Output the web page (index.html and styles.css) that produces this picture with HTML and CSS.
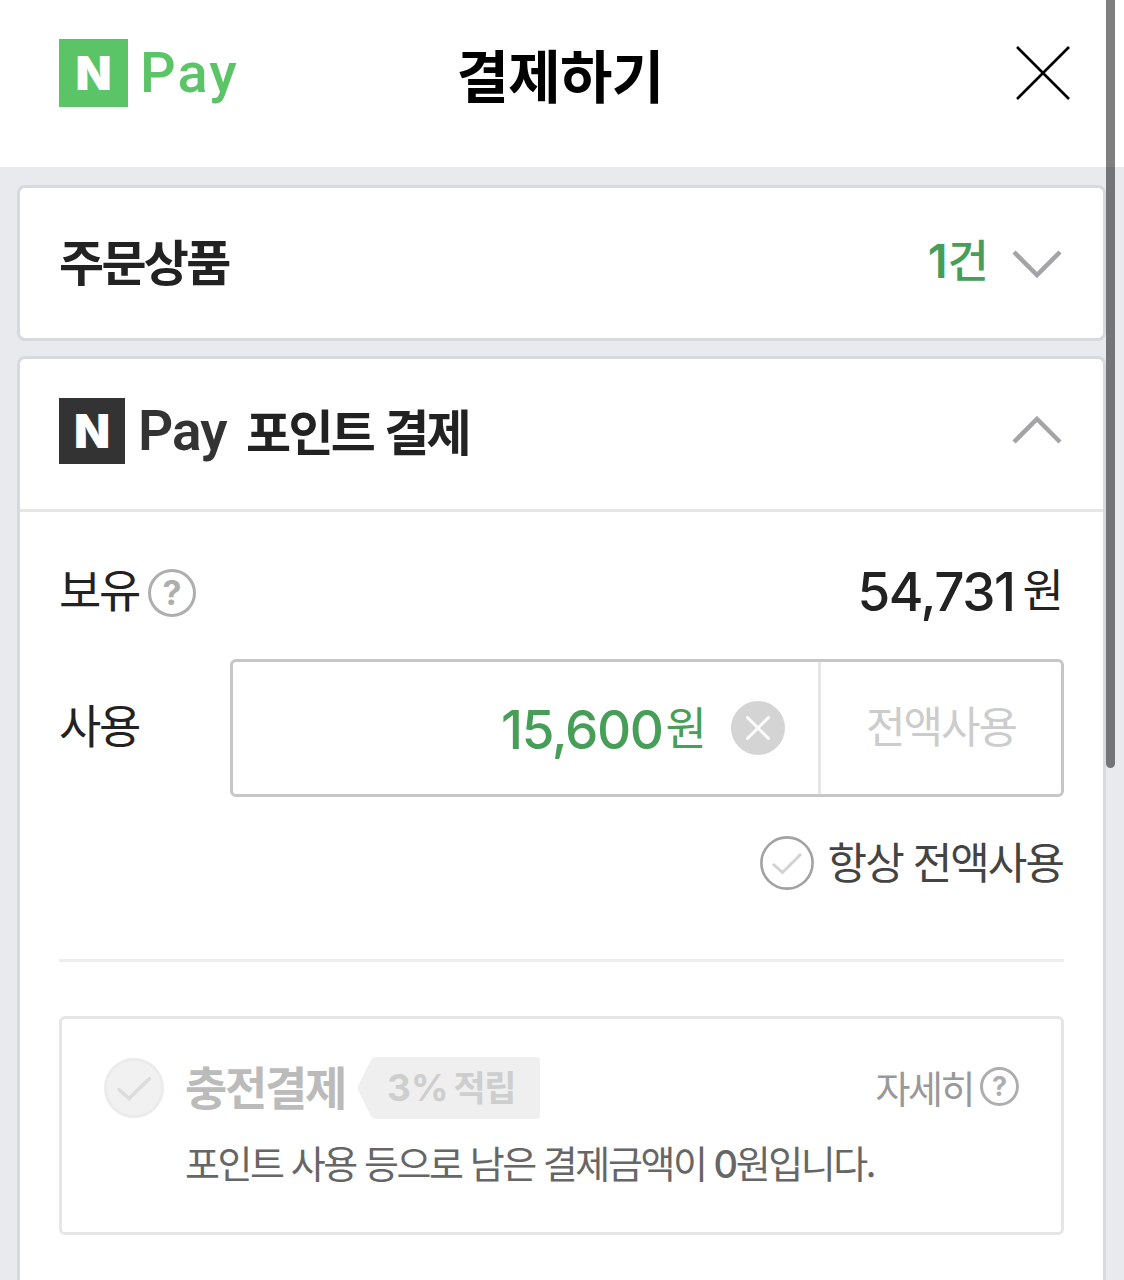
FILE: index.html
```html
<!DOCTYPE html>
<html lang="ko">
<head>
    <meta charset="UTF-8">
    <meta name="viewport" content="width=device-width, initial-scale=1.0">
    <title>결제하기</title>
    <link rel="stylesheet" href="styles.css">
</head>
<body>
    <header class="header">
        <div class="logo">
            <span class="logo-box">N</span>
            <span class="logo-pay">Pay</span>
        </div>
        <h1 class="title">결제하기</h1>
        <svg class="close" width="56" height="56" viewBox="0 0 56 56">
            <path d="M2 2L54 54M54 2L2 54" stroke="#000" stroke-width="2.6" fill="none"/>
        </svg>
    </header>

    <main class="content">
        <section class="card order">
            <div class="card-head">
                <h2 class="card-title">주문상품</h2>
                <div class="count"><span class="count-num">1</span><span class="count-unit">건</span></div>
                <svg class="arrow" width="50" height="30" viewBox="0 0 50 30">
                    <path d="M2 4L25 27L48 4" stroke="#a3a4a8" stroke-width="4.5" fill="none"/>
                </svg>
            </div>
        </section>

        <section class="card point">
            <div class="card-head line">
                <div class="logo dark">
                    <span class="logo-box">N</span>
                    <span class="logo-pay">Pay</span>
                </div>
                <h2 class="card-title">포인트 결제</h2>
                <svg class="arrow" width="50" height="30" viewBox="0 0 50 30">
                    <path d="M2 26L25 3L48 26" stroke="#a3a4a8" stroke-width="4.5" fill="none"/>
                </svg>
            </div>
            <div class="card-body">
                <div class="row have">
                    <span class="label">보유</span>
                    <span class="help">?</span>
                    <div class="money"><span class="num">54,731</span><span class="won">원</span></div>
                </div>
                <div class="row use">
                    <span class="label">사용</span>
                    <div class="input-box">
                        <div class="input">
                            <div class="money green"><span class="num">15,600</span><span class="won">원</span></div>
                            <svg class="clear" width="54" height="54" viewBox="0 0 54 54">
                                <circle cx="27" cy="27" r="27" fill="#d4d4d4"/>
                                <path d="M16.5 16.5L37.5 37.5M37.5 16.5L16.5 37.5" stroke="#fff" stroke-width="3" stroke-linecap="round"/>
                            </svg>
                        </div>
                        <div class="use-all">전액사용</div>
                    </div>
                </div>
                <div class="row always">
                    <svg width="54" height="54" viewBox="0 0 54 54">
                        <circle cx="27" cy="27" r="25.6" fill="#fff" stroke="#a2a2a4" stroke-width="2.6"/>
                        <path d="M13 28L22.5 36.5L41 18" fill="none" stroke="#d2d2d4" stroke-width="3"/>
                    </svg>
                    <span class="always-text">항상 전액사용</span>
                </div>
                <hr>
                <div class="charge">
                    <div class="charge-top">
                        <svg width="60" height="60" viewBox="0 0 60 60">
                            <circle cx="30" cy="30" r="28.6" fill="#f1f1f1" stroke="#ebebeb" stroke-width="2.8"/>
                            <path d="M15 31.5L25 40.5L45.5 20.5" fill="none" stroke="#dcdcdc" stroke-width="3.5" stroke-linecap="round"/>
                        </svg>
                        <strong class="charge-title">충전결제</strong>
                        <div class="badge">
                            <svg class="badge-bg" width="183" height="62" viewBox="0 0 183 62">
                                <path d="M1 33Q0 31 1 29L14 3Q15.5 0 18 0H180Q183 0 183 3V59Q183 62 180 62H18Q15.5 62 14 59Z" fill="#efefef"/>
                            </svg>
                            <span class="badge-num">3%</span><span class="badge-text">적립</span>
                        </div>
                        <span class="detail">자세히</span>
                        <span class="help small">?</span>
                    </div>
                    <p class="desc">포인트 사용 등으로 남은 결제금액이 <span class="zero">0</span>원입니다.</p>
                </div>
            </div>
        </section>
    </main>
    <div class="scroll"></div>
</body>
</html>
```
FILE: styles.css
```css
*{
    box-sizing: border-box;
}
body{
    margin: 0;
    height: 1280px;
    overflow: hidden;
    display: flex;
    flex-direction: column;
    font-family: "Noto Sans CJK KR", sans-serif;
    background-color: #e8eaee;
    color: #222;
}
h1, h2, p{
    margin: 0;
    white-space: nowrap;
}
svg{
    display: block;
    flex: none;
}
span, strong{
    white-space: nowrap;
}

/* header */
.header{
    height: 167px;
    flex: none;
    display: grid;
    grid-template-columns: 1fr auto 1fr;
    align-items: center;
    padding: 0 53px 21px 59px;
    background-color: #fff;
}
.title{
    margin-right: 10px;
    font-size: 57px;
    font-weight: 600;
    line-height: 80px;
    letter-spacing: -0.7px;
    color: #000;
}
.close{
    justify-self: end;
}
.logo{
    display: flex;
    align-items: center;
    color: #5bc467;
}
.logo-box{
    width: 69px;
    height: 68px;
    display: flex;
    justify-content: center;
    align-items: center;
    background-color: #5bc467;
    color: #fff;
    font-family: Inter, sans-serif;
    font-size: 47px;
    font-weight: 900;
    line-height: 68px;
}
.logo-pay{
    margin-left: 12px;
    font-family: Roboto, sans-serif;
    font-size: 56px;
    font-weight: 500;
    line-height: 66px;
    letter-spacing: 2px;
}
.dark{
    color: #333;
}
.dark .logo-box{
    width: 66px;
    height: 66px;
    background-color: #333;
}
.dark .logo-pay{
    margin-left: 13px;
    font-size: 55px;
    font-weight: 600;
    letter-spacing: -1px;
}

/* cards */
.content{
    padding: 18px 18px 0 17px;
}
.card{
    border: 3px solid #d6dade;
    border-radius: 8px;
    background-color: #fff;
}
.order{
    height: 156px;
    margin-bottom: 15px;
}
.point{
    height: 960px;
}
.card-head{
    height: 150px;
    display: flex;
    align-items: center;
    padding: 0 41px 0 39px;
}
.line{
    height: 153px;
    padding-bottom: 6px;
    border-bottom: 3px solid #e6e6e6;
}
.card-title{
    padding-bottom: 7px;
    font-size: 49px;
    font-weight: 600;
    line-height: 70px;
    letter-spacing: -2.7px;
}
/* fixed logo width keeps the title start in place */
.dark{
    width: 169px;
}
.dark + .card-title{
    margin-left: 18px;
    padding-bottom: 2px;
}
.arrow{
    margin-left: auto;
}
.count{
    margin-left: auto;
    padding-bottom: 6px;
    color: #479e58;
    font-weight: 600;
    display: flex;
    align-items: baseline;
    line-height: 70px;
}
.count-num{
    font-family: Inter, sans-serif;
    font-size: 47px;
}
.count-unit{
    font-size: 45px;
    font-weight: 500;
}
.count + .arrow{
    margin-left: 23px;
}

/* point */
.card-body{
    padding: 45px 39px 0;
}
.row{
    display: flex;
    align-items: center;
}
.have{
    height: 70px;
}
.label{
    padding-bottom: 10px;
    font-size: 46px;
    line-height: 70px;
    letter-spacing: -2.3px;
}
.help{
    width: 48px;
    height: 48px;
    margin: 2px 0 0 9px;
    border: 3px solid #aeaeae;
    border-radius: 50%;
    color: #aeaeae;
    font-family: Inter, sans-serif;
    font-size: 34px;
    font-weight: 700;
    line-height: 42px;
    text-align: center;
}
.money{
    margin-left: auto;
    display: flex;
    align-items: center;
    line-height: 70px;
}
.num{
    font-family: Inter, sans-serif;
    font-size: 53px;
    font-weight: 500;
    letter-spacing: -1.4px;
}
.won{
    margin-left: 8px;
    padding-bottom: 8px;
    font-size: 45px;
}
.green{
    padding-top: 4px;
    color: #479e58;
}
.green .won{
    margin-left: 3px;
}
.use{
    margin-top: 32px;
    justify-content: space-between;
}
.input-box{
    width: 834px;
    height: 138px;
    display: flex;
    border: 3px solid #c6c6c6;
    border-radius: 6px;
}
.input{
    flex: 1;
    display: flex;
    align-items: center;
    padding-right: 33px;
}
.clear{
    margin-left: 24px;
}
.use-all{
    width: 243px;
    border-left: 3px solid #e6e6e6;
    color: #ccc;
    font-size: 43px;
    line-height: 125px;
    letter-spacing: -2px;
    text-align: center;
}
.always{
    height: 54px;
    margin-top: 39px;
    padding-right: 1px;
    justify-content: flex-end;
    gap: 14px;
}
.always-text{
    padding-bottom: 6px;
    color: #444;
    font-size: 43px;
    line-height: 54px;
    letter-spacing: -2px;
}
hr{
    height: 3px;
    margin: 69px 0 54px;
    border: 0;
    background-color: #ededed;
}

/* charge */
.charge{
    height: 219px;
    padding: 39px 42px 0;
    border: 3px solid #e6e6e6;
    border-radius: 6px;
}
.charge-top{
    height: 60px;
    display: flex;
    align-items: center;
}
.charge-title{
    margin-left: 21px;
    padding-bottom: 6px;
    color: #bbb;
    font-size: 46px;
    font-weight: 700;
    line-height: 60px;
    letter-spacing: -2.3px;
}
.badge{
    position: relative;
    width: 183px;
    height: 62px;
    margin-left: 12px;
    padding-left: 30px;
    display: flex;
    align-items: baseline;
    color: #cecece;
    font-weight: 700;
    line-height: 57px;
}
.badge-bg{
    position: absolute;
    left: 0;
    top: 0;
}
.badge-num{
    position: relative;
    font-family: Inter, sans-serif;
    font-size: 37px;
}
.badge-text{
    position: relative;
    margin-left: 5px;
    font-size: 35px;
    letter-spacing: -1.5px;
}
.detail{
    margin-left: auto;
    padding-bottom: 3px;
    color: #999;
    font-size: 38px;
    line-height: 60px;
    letter-spacing: -2.5px;
}
.small{
    width: 39px;
    height: 39px;
    margin: 0 0 3px 7px;
    font-size: 27px;
    line-height: 33px;
}
.desc{
    margin-top: 16px;
    padding-left: 81px;
    color: #666;
    font-size: 38px;
    line-height: 56px;
    letter-spacing: -2.45px;
}
.zero{
    font-family: Inter, sans-serif;
    font-weight: 500;
}

/* scroll bar over the page */
.scroll{
    position: fixed;
    top: 0;
    right: 9px;
    width: 9px;
    height: 768px;
    border-radius: 0 0 5px 5px;
    background-color: rgba(0, 0, 0, 0.5);
}
```
